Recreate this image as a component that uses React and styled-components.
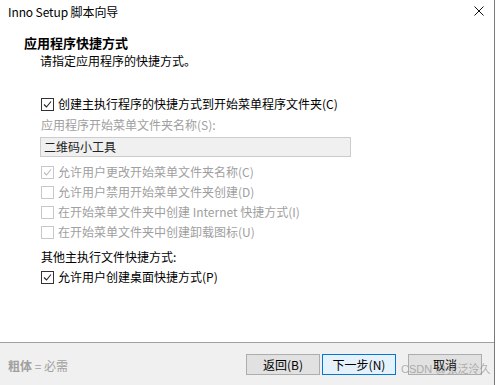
import React from "react";
import styled, { createGlobalStyle } from "styled-components";

const Global = createGlobalStyle`
  html, body { margin: 0; padding: 0; background: #fff; }
  body { font-family: "Noto Sans CJK SC", "Noto Sans", sans-serif; font-size: 12px; color: #000; }
`;

const Window = styled.div`
  width: 494px;
  height: 385px;
  border-right: 1px solid #7a7a7a;
  display: flex;
  flex-direction: column;
  background: #fff;
  position: relative;
`;

const TitleBar = styled.div`
  height: 24px;
  display: flex;
  align-items: center;
  justify-content: space-between;
  padding: 0 10px 0 8px;
  font-size: 12px;
  line-height: 24px;
  color: #000;
`;

const TitleText = styled.span`
  font-family: "Noto Sans CJK SC", "Noto Sans", sans-serif;
  letter-spacing: -0.1px;
`;

const CloseIcon = styled.svg`
  width: 10px;
  height: 10px;
  margin-top: -2px;
`;

const Header = styled.div`
  margin-top: 10px;
  padding-left: 24px;
  display: flex;
  flex-direction: column;
`;

const Heading = styled.div`
  font-weight: bold;
  font-size: 13px;
  line-height: 18px;
`;

const Subtitle = styled.div`
  padding-left: 16px;
  font-size: 12px;
  line-height: 17px;
`;

const Content = styled.div`
  margin-top: 25px;
  padding-left: 40px;
  display: flex;
  flex-direction: column;
`;

const Row = styled.div`
  height: 20px;
  display: flex;
  align-items: center;
  gap: 4px;
  padding-left: 1px;
  color: ${(p) => (p.$disabled ? "#a0a0a0" : "#000")};
  line-height: 20px;
`;

const Box = styled.span`
  width: 11px;
  height: 11px;
  border: 1px solid ${(p) => (p.$disabled ? "#c8c8c8" : "#333")};
  background: #fff;
  display: flex;
  align-items: center;
  justify-content: center;
  flex-shrink: 0;
`;

const Label = styled.div`
  height: 21px;
  line-height: 21px;
  padding-left: 1px;
  color: ${(p) => (p.$disabled ? "#a0a0a0" : "#000")};
  margin-top: ${(p) => p.$mt || 0}px;
`;

const Input = styled.div`
  width: 306px;
  height: 18px;
  margin-top: 2px;
  margin-bottom: 5px;
  border: 1px solid #cccccc;
  background: #f0f0f0;
  padding-left: 3px;
  line-height: 18px;
  color: #222;
`;

const Footer = styled.div`
  margin-top: auto;
  height: 43px;
  border-top: 1px solid #a0a0a0;
  background: #f0f0f0;
  display: flex;
  align-items: flex-start;
  padding: 11px 12px 0 8px;
  box-sizing: border-box;
`;

const Hint = styled.div`
  margin-top: 2px;
  line-height: 20px;
  color: #a0a0a0;
  flex: 1;
`;

const Bold = styled.b`
  font-weight: bold;
`;

const Buttons = styled.div`
  display: flex;
  gap: 2px;
`;

const Button = styled.div`
  width: 72px;
  height: 19px;
  border: 1px solid ${(p) => (p.$primary ? "#0078d7" : "#adadad")};
  background: ${(p) => (p.$primary ? "#e5f1fb" : "#e1e1e1")};
  display: flex;
  align-items: center;
  justify-content: center;
  margin-left: ${(p) => p.$ml || 0}px;
  font-size: 12px;
`;

const Watermark = styled.div`
  position: absolute;
  left: 401px;
  top: 360px;
  font-family: "Liberation Sans", "Noto Sans CJK SC", sans-serif;
  font-size: 11px;
  color: rgba(120, 120, 120, 0.55);
  white-space: nowrap;
  pointer-events: none;
`;

function Check({ checked, disabled }) {
  return (
    <Box $disabled={disabled}>
      {checked && (
        <svg width="9" height="9" viewBox="0 0 9 9">
          <polyline
            points="1,4.5 3.5,7 8,1.5"
            fill="none"
            stroke={disabled ? "#b8b8b8" : "#222"}
            strokeWidth="1.1"
          />
        </svg>
      )}
    </Box>
  );
}

function CheckRow({ checked, disabled, children }) {
  return (
    <Row $disabled={disabled}>
      <Check checked={checked} disabled={disabled} />
      <span>{children}</span>
    </Row>
  );
}

export default function App() {
  return (
    <>
      <Global />
      <Window>
        <TitleBar>
          <TitleText>Inno Setup 脚本向导</TitleText>
          <CloseIcon viewBox="0 0 10 10">
            <path d="M0.5 0.5 L9.5 9.5 M9.5 0.5 L0.5 9.5" stroke="#111" strokeWidth="1" />
          </CloseIcon>
        </TitleBar>
        <Header>
          <Heading>应用程序快捷方式</Heading>
          <Subtitle>请指定应用程序的快捷方式。</Subtitle>
        </Header>
        <Content>
          <CheckRow checked>创建主执行程序的快捷方式到开始菜单程序文件夹(C)</CheckRow>
          <Label $disabled>应用程序开始菜单文件夹名称(S):</Label>
          <Input>二维码小工具</Input>
          <CheckRow checked disabled>允许用户更改开始菜单文件夹名称(C)</CheckRow>
          <CheckRow disabled>允许用户禁用开始菜单文件夹创建(D)</CheckRow>
          <CheckRow disabled>在开始菜单文件夹中创建 Internet 快捷方式(I)</CheckRow>
          <CheckRow disabled>在开始菜单文件夹中创建卸载图标(U)</CheckRow>
          <Label $mt={4}>其他主执行文件快捷方式:</Label>
          <CheckRow checked>允许用户创建桌面快捷方式(P)</CheckRow>
        </Content>
        <Footer>
          <Hint>
            <Bold>粗体</Bold> = 必需
          </Hint>
          <Buttons>
            <Button>返回(B)</Button>
            <Button $primary>下一步(N)</Button>
            <Button $ml={10}>取消</Button>
          </Buttons>
        </Footer>
        <Watermark>CSDN @张泛泠久</Watermark>
      </Window>
    </>
  );
}
